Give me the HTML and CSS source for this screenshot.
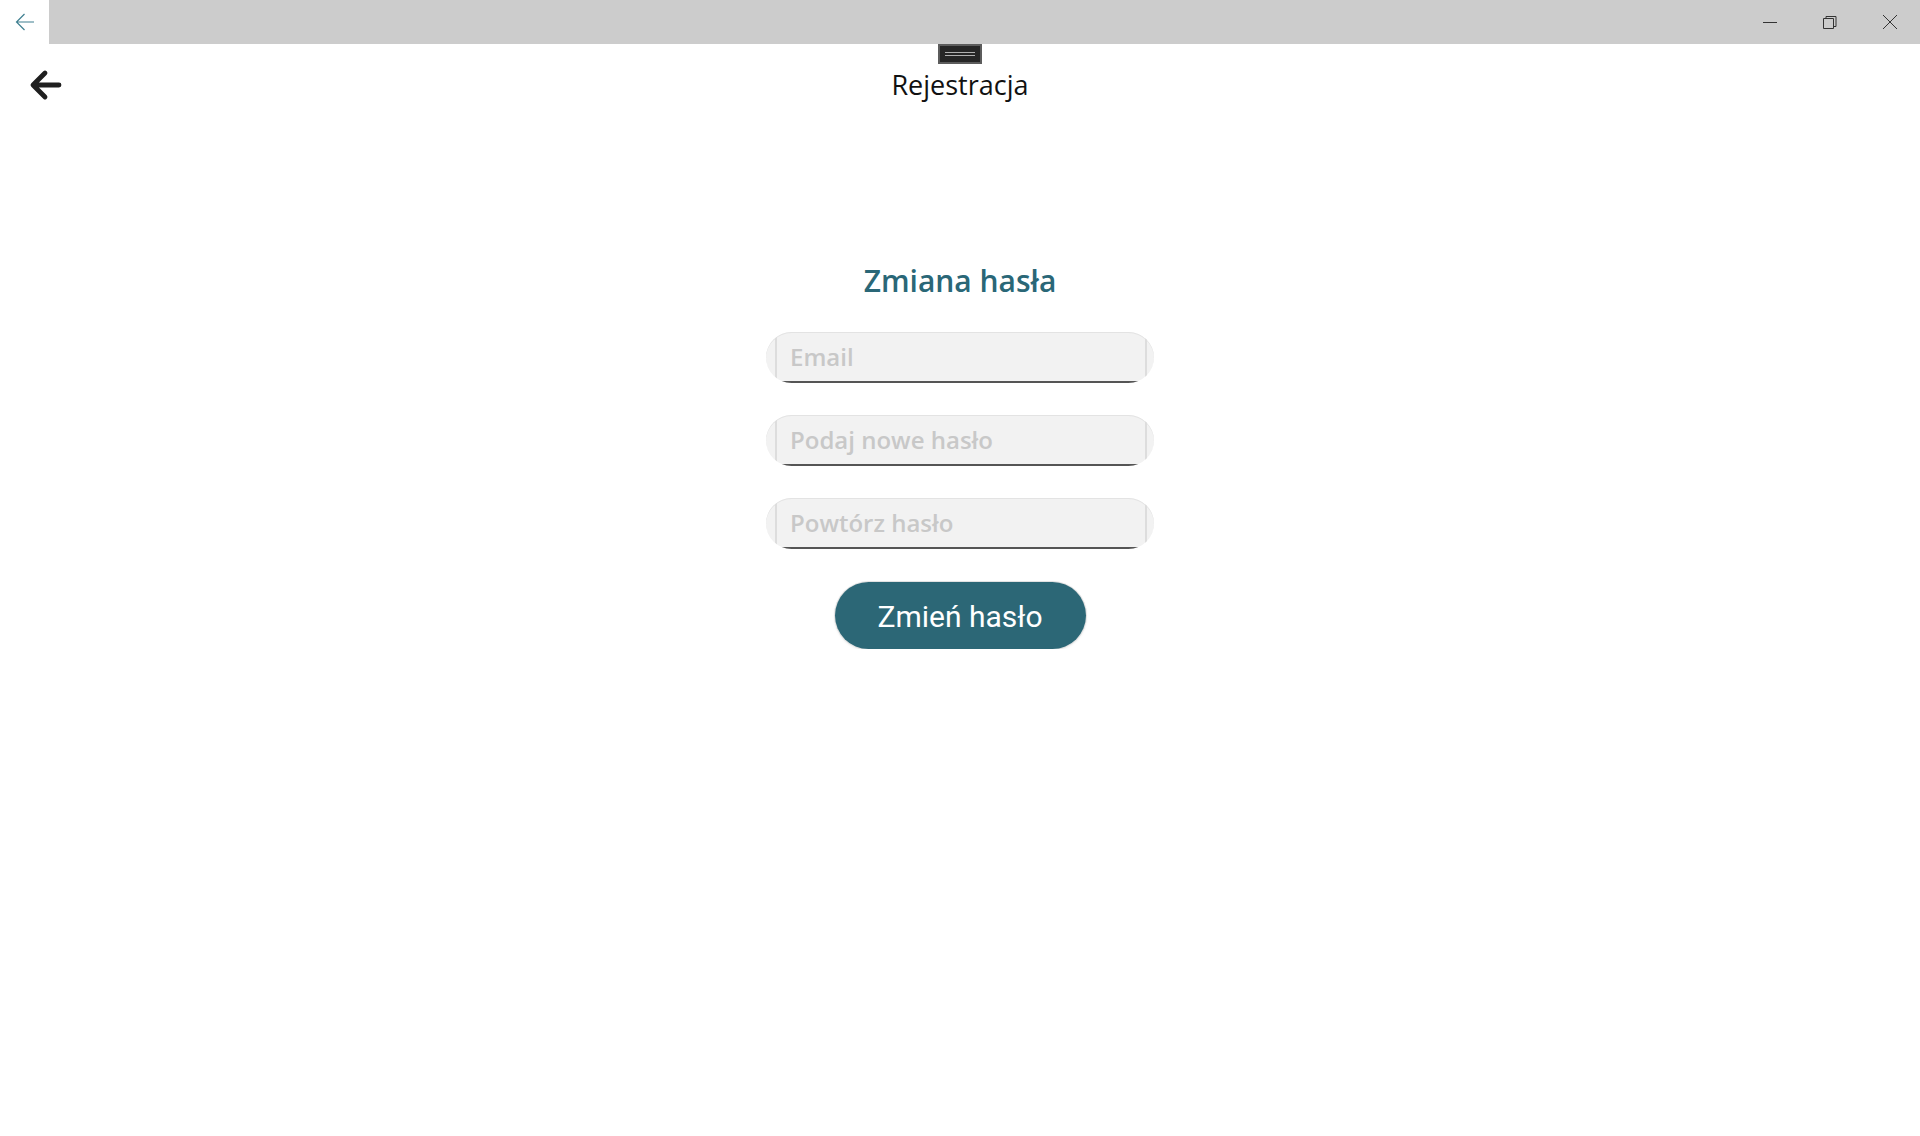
FILE: index.html
```html
<!DOCTYPE html>
<html lang="pl">
<head>
<meta charset="utf-8">
<title>Rejestracja</title>
<link rel="stylesheet" href="styles.css">
</head>
<body>
<div class="titlebar">
  <button class="tb-back" aria-label="Wstecz">
    <svg width="20" height="18" viewBox="0 0 20 18"><path d="M19 9H1.5M9.5 1L1.5 9l8 8" fill="none" stroke="#3f7f90" stroke-width="1.2"/></svg>
  </button>
  <div class="tb-fill">
    <div class="tb-controls">
      <span class="tb-btn"><svg width="16" height="16" viewBox="0 0 16 16"><path d="M1 8.5h14" stroke="#333" stroke-width="1"/></svg></span>
      <span class="tb-btn"><svg width="16" height="16" viewBox="0 0 16 16"><path d="M1.5 4.5h10v10h-10z" fill="none" stroke="#333" stroke-width="1"/><path d="M4 4.5V2.5h10v10h-2.5" fill="none" stroke="#333" stroke-width="1"/></svg></span>
      <span class="tb-btn"><svg width="16" height="16" viewBox="0 0 16 16"><path d="M1 1l14 14M15 1L1 15" stroke="#333" stroke-width="1"/></svg></span>
    </div>
  </div>
</div>

<header class="appbar">
  <div class="handle"><span></span><span></span></div>
  <div class="bar-row">
    <button class="back" aria-label="Wstecz">
      <svg width="34" height="34" viewBox="0 0 34 34"><path d="M31 17H6M17 5L5 17l12 12" fill="none" stroke="#1f1f1f" stroke-width="4.8" stroke-linecap="round" stroke-linejoin="round"/></svg>
    </button>
    <h1 class="page-title">Rejestracja</h1>
    <span></span>
  </div>
</header>

<main class="content">
  <h2 class="heading">Zmiana hasła</h2>
  <form class="form">
    <div class="field"><div class="field-inner"><input type="email" placeholder="Email"></div></div>
    <div class="field"><div class="field-inner"><input type="password" placeholder="Podaj nowe hasło"></div></div>
    <div class="field"><div class="field-inner"><input type="password" placeholder="Powtórz hasło"></div></div>
    <button type="button" class="submit">Zmień hasło</button>
  </form>
</main>
</body>
</html>
```

FILE: styles.css
```css
* { box-sizing: border-box; }
html, body { margin: 0; padding: 0; background: #fff; }
body { font-family: "Open Sans", "Noto Sans", sans-serif; color: #000; }
button { font: inherit; border: 0; background: none; padding: 0; cursor: pointer; }

.titlebar { display: flex; height: 44px; }
.tb-back { width: 49px; height: 44px; background: #fff; display: flex; align-items: center; justify-content: center; padding-left: 1px; }
.tb-fill { flex: 1; background: #cccccc; display: flex; justify-content: flex-end; }
.tb-controls { display: flex; }
.tb-btn { width: 60px; height: 44px; display: flex; align-items: center; justify-content: center; }

.appbar { display: flex; flex-direction: column; align-items: center; }
.handle { width: 44px; height: 20px; background: #262626; border: 2px solid #5c5c5c; display: flex; flex-direction: column; justify-content: center; align-items: center; gap: 2px; }
.handle span { display: block; width: 30px; height: 1px; background: #b0b0b0; }
.bar-row { width: 100%; display: grid; grid-template-columns: 1fr auto 1fr; align-items: center; margin-top: 3px; }
.back { justify-self: start; margin-left: 28px; width: 34px; height: 34px; display: flex; align-items: center; justify-content: center; }
.page-title { margin: 0; font-size: 27px; font-weight: 400; line-height: 36px; color: #111; }

.content { display: flex; flex-direction: column; align-items: center; padding-top: 159px; }
.heading { margin: 0; font-size: 30px; font-weight: 600; line-height: 38px; color: #2a6777; }
.form { margin-top: 32px; display: flex; flex-direction: column; align-items: center; gap: 32px; }
.field { width: 388px; height: 51px; border-radius: 26px; background: #f2f2f2; overflow: hidden; box-shadow: inset 0 1px 0 #e3e3e3; }
.field-inner { height: 100%; margin: 0 7px 0 9px; border-left: 2px solid #dddddd; border-right: 2px solid #dddddd; border-bottom: 2px solid #555; display: flex; align-items: center; }
.field input { width: 100%; border: 0; outline: 0; background: transparent; font-family: "Open Sans", sans-serif; font-size: 24px; font-weight: 600; padding: 0 0 0 13px; color: #222; }
.field input::placeholder { color: #c8c8c8; }

.submit { width: 251px; height: 67px; margin-top: 1px; border-radius: 34px; background: #2c6776; color: #fff; font-family: Roboto, "Noto Sans", sans-serif; font-size: 30px; padding-top: 2px; box-shadow: 0 0 0 1px #e2e2e2, 0 1px 3px rgba(0,0,0,0.12); }
```
